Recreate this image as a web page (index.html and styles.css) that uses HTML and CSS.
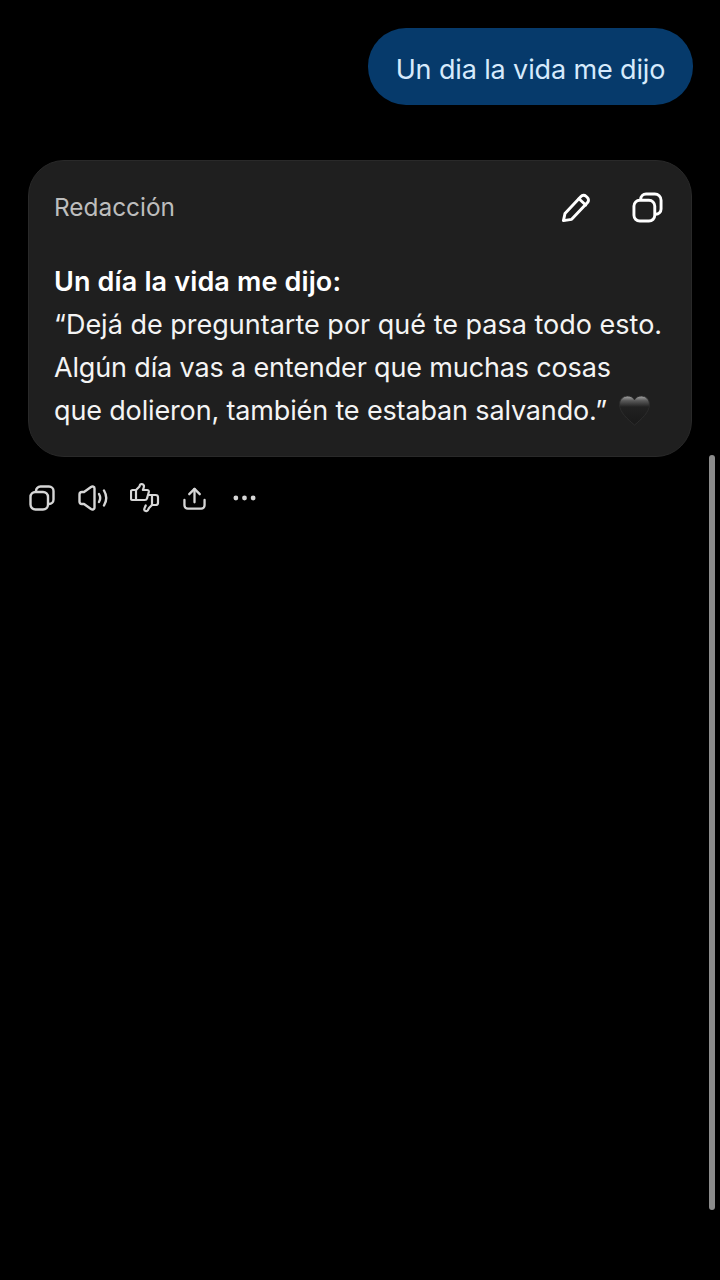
FILE: index.html
```html
<!DOCTYPE html>
<html lang="es">
<head>
<meta charset="utf-8">
<title>Chat</title>
<link rel="stylesheet" href="styles.css">
</head>
<body>
<main class="chat">
  <div class="user-row"><div class="bubble">Un dia la vida me dijo</div></div>
  <section class="card">
    <header class="card-head">
      <span class="card-title">Redacción</span>
      <div class="card-tools">
        <svg class="icon-lg" viewBox="0 0 32 32" fill="none" stroke="#fff" stroke-width="3" stroke-linejoin="round" stroke-linecap="round"><path d="M2.500 29.500l1.600-7.200L20.600 4.600a3.700 3.700 0 0 1 5.200-.2l1.400 1.300a3.700 3.700 0 0 1 .2 5.200L11 28.200z"/><path d="M18.500 7l7 6.400"/></svg>
        <svg class="icon-lg" viewBox="0 0 32 32" fill="none" stroke="#fff" stroke-width="3" stroke-linejoin="round"><rect x="2" y="8.500" width="21.500" height="21.500" rx="6"/><path d="M9 8.500V7.500A5.500 5.500 0 0 1 14.500 2h9A6.500 6.500 0 0 1 30 8.500v9a5.500 5.500 0 0 1-5.500 5.500h-1"/></svg>
      </div>
    </header>
    <div class="card-body">
      <p class="heading">Un día la vida me dijo:</p>
      <p class="line">“Dejá de preguntarte por qué te pasa todo esto.</p>
      <p class="line tight">Algún día vas a entender que muchas cosas</p>
      <p class="line tight">que dolieron, también te estaban salvando.”<svg class="heart" viewBox="0 0 32 32"><defs><linearGradient id="hg" x1="0" y1="0" x2="0" y2="1"><stop offset="0" stop-color="#a8a8a8"/><stop offset=".16" stop-color="#5a5a5a"/><stop offset=".38" stop-color="#212121"/><stop offset="1" stop-color="#191919"/></linearGradient></defs><path fill="url(#hg)" stroke="#2c2c2c" stroke-width="1" d="M16 31C9 25 .5 18 .5 9.500 .5 4.500 4.500 1 9 1c3 0 5.500 1.500 7 4 1.500-2.500 4-4 7-4 4.500 0 8.500 3.500 8.500 8.500C31.500 18 23 25 16 31z"/></svg></p>
    </div>
  </section>
  <div class="actions">
    <svg class="icon-copy" viewBox="0 0 26 26" fill="none" stroke="#d6d6d6" stroke-width="2.400" stroke-linejoin="round"><rect x="1.500" y="7" width="17.500" height="17.500" rx="5"/><path d="M7 7V6a4.500 4.500 0 0 1 4.500-4.500h8.500A4.500 4.500 0 0 1 24.500 6v8.500A4.500 4.500 0 0 1 20 19h-1"/></svg>
    <svg class="icon-speak" viewBox="0 0 30 26" fill="none" stroke="#d6d6d6" stroke-width="2.400" stroke-linecap="round" stroke-linejoin="round"><path d="M1.500 9.500C1.500 8 2.500 7 4 7h2L13 2c1.500-1 3.500-.3 3.500 1.500v19c0 1.800-2 2.500-3.500 1.500l-7-5H4c-1.500 0-2.500-1-2.500-2.500z"/><path d="M21 9c1.500 2.500 1.500 5.500 0 8"/><path d="M26 5.500c2.700 4.500 2.700 10.500 0 15"/></svg>
    <svg class="icon-thumb" viewBox="0 0 30 30" fill="none" stroke="#d6d6d6" stroke-width="2.200" stroke-linecap="round" stroke-linejoin="round"><path d="M6 7H2.500A1.500 1.500 0 0 0 1 8.500v7A1.500 1.500 0 0 0 2.500 17H6z"/><path d="M6 7l3.500-3.500.4-1.500c.4-1.300 3.600-1 4 .6.300 1.400-.4 3-1 4.400H17c1.400 0 2 .9 1.800 2L17 15.500c-.3 1-1 1.500-2 1.500H6"/><path d="M22 12h3.500c1.300 0 2.500 1 2.500 2.300v5.400c0 1.300-1.200 2.300-2.500 2.300H22z"/><path d="M19 12h3M22 22l-3 3-1.300 2.500c-.7 1.100-3.500.5-3.500-1.100 0-1.300.9-2.400 1.500-3.900"/></svg>
    <svg class="icon-share" viewBox="0 0 24 24" fill="none" stroke="#d6d6d6" stroke-width="2.400" stroke-linecap="round" stroke-linejoin="round"><path d="M12 16V2"/><path d="M6.500 7.500L12 2l5.500 5.500"/><path d="M1.500 13.500V19a3.500 3.500 0 0 0 3.500 3.500h14a3.500 3.500 0 0 0 3.500-3.500v-5.500"/></svg>
    <svg class="icon-dots" viewBox="0 0 24 6" fill="#d6d6d6"><circle cx="3" cy="3" r="2.500"/><circle cx="12" cy="3" r="2.500"/><circle cx="21" cy="3" r="2.500"/></svg>
  </div>
  <div class="scrollbar"></div>
</main>
</body>
</html>
```

FILE: styles.css
```css
* { box-sizing: border-box; }
html, body { margin: 0; height: 100%; background: #000; }
body { font-family: Inter, "Liberation Sans", sans-serif; color: #fff; overflow: hidden; }
.chat { position: relative; height: 1280px; padding: 28px 28px 0; }
.user-row { display: flex; justify-content: flex-end; }
.bubble {
  height: 77px; width: 325px; margin-right: -1px; border-radius: 38px;
  background: #063a6b; color: #d6eafc;
  padding-top: 6px; font-size: 27px; line-height: 71px; letter-spacing: -0.13px;
  text-align: center; white-space: nowrap;
}
.card {
  margin-top: 55px; height: 297px; background: #1f1f1f;
  border: 1px solid #292929; border-radius: 36px;
  padding: 0 28px 0 25px;
}
.card-head { display: flex; justify-content: space-between; align-items: center; height: 99px; padding-bottom: 7px; }
.card-title { font-size: 24.400px; color: #bdbdbd; }
.card-tools { display: flex; gap: 40px; }
.icon-lg { width: 31px; height: 31px; display: block; }
.card-body { font-size: 27px; line-height: 43px; color: #f4f4f4; }
.card-body p { margin: 0; white-space: nowrap; }
.heading { font-weight: 600; color: #fff; letter-spacing: 0.14px; }
.tight { letter-spacing: -0.15px; }
.heart { width: 31px; height: 31px; margin-left: 12px; vertical-align: -6px; }
.actions { display: flex; align-items: center; gap: 23px; height: 30px; margin-top: 26px; margin-left: 1px; }
.actions svg { display: block; flex: none; }
.icon-copy { width: 26px; height: 26px; }
.icon-speak { width: 30px; height: 26px; margin-right: -1px; }
.icon-thumb { width: 30px; height: 30px; }
.icon-share { width: 23px; height: 23px; }
.icon-dots { width: 23px; height: 6px; margin-left: 4px; }
.scrollbar { position: absolute; left: 709px; top: 455px; width: 6px; height: 755px; border-radius: 3px; background: #8c8c8c; }
```
